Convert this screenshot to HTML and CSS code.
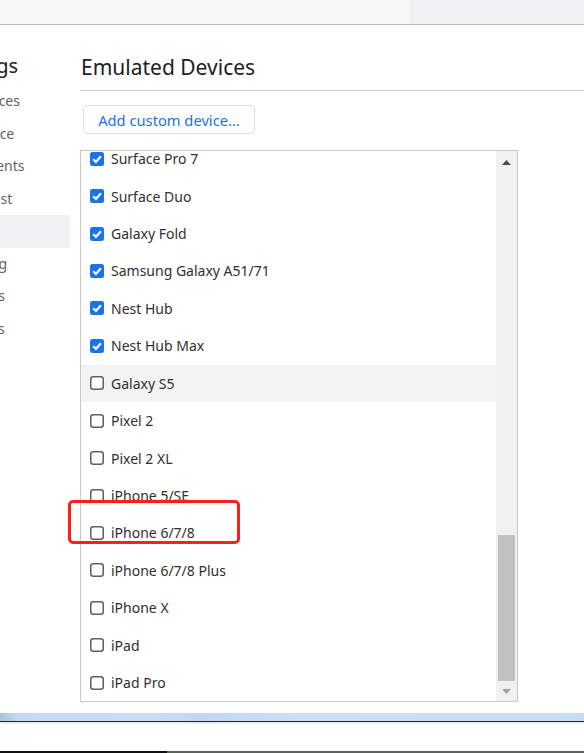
FILE: index.html
```html
<!DOCTYPE html>
<html>
<head>
<meta charset="utf-8">
<link rel="stylesheet" href="styles.css">
</head>
<body>
<div class="page">
  <div class="topbar"><div class="tb-left"></div><div class="tb-right"></div></div>
  <div class="window">
    <nav class="sidebar">
      <div class="sb-inner">
        <div class="sb-title">Settings</div>
        <div class="sb-item">Preferences</div>
        <div class="sb-item">Workspace</div>
        <div class="sb-item">Experiments</div>
        <div class="sb-item">Ignore List</div>
        <div class="sb-item selected">Devices</div>
        <div class="sb-item">Throttling</div>
        <div class="sb-item">Locations</div>
        <div class="sb-item">Shortcuts</div>
      </div>
    </nav>
    <main class="main">
      <h1 class="heading">Emulated Devices</h1>
      <button class="add-btn">Add custom device...</button>
      <div class="listbox">
        <div class="viewport">
          <div class="rows">
            <div class="row"><svg class="cb" viewBox="0 0 14 14"><rect x="0" y="0" width="14" height="14" rx="2.5" fill="#1a73e8"/><path d="M3.2 7.3 L5.9 9.9 L10.9 4.3" fill="none" stroke="#fff" stroke-width="2.2"/></svg><span>Surface Pro 7</span></div>
            <div class="row"><svg class="cb" viewBox="0 0 14 14"><rect x="0" y="0" width="14" height="14" rx="2.5" fill="#1a73e8"/><path d="M3.2 7.3 L5.9 9.9 L10.9 4.3" fill="none" stroke="#fff" stroke-width="2.2"/></svg><span>Surface Duo</span></div>
            <div class="row"><svg class="cb" viewBox="0 0 14 14"><rect x="0" y="0" width="14" height="14" rx="2.5" fill="#1a73e8"/><path d="M3.2 7.3 L5.9 9.9 L10.9 4.3" fill="none" stroke="#fff" stroke-width="2.2"/></svg><span>Galaxy Fold</span></div>
            <div class="row"><svg class="cb" viewBox="0 0 14 14"><rect x="0" y="0" width="14" height="14" rx="2.5" fill="#1a73e8"/><path d="M3.2 7.3 L5.9 9.9 L10.9 4.3" fill="none" stroke="#fff" stroke-width="2.2"/></svg><span>Samsung Galaxy A51/71</span></div>
            <div class="row"><svg class="cb" viewBox="0 0 14 14"><rect x="0" y="0" width="14" height="14" rx="2.5" fill="#1a73e8"/><path d="M3.2 7.3 L5.9 9.9 L10.9 4.3" fill="none" stroke="#fff" stroke-width="2.2"/></svg><span>Nest Hub</span></div>
            <div class="row"><svg class="cb" viewBox="0 0 14 14"><rect x="0" y="0" width="14" height="14" rx="2.5" fill="#1a73e8"/><path d="M3.2 7.3 L5.9 9.9 L10.9 4.3" fill="none" stroke="#fff" stroke-width="2.2"/></svg><span>Nest Hub Max</span></div>
            <div class="row hover"><svg class="cb" viewBox="0 0 14 14"><rect x="0.75" y="0.75" width="12.5" height="12.5" rx="2.5" fill="#fff" stroke="#5f5f5f" stroke-width="1.5"/></svg><span>Galaxy S5</span></div>
            <div class="row"><svg class="cb" viewBox="0 0 14 14"><rect x="0.75" y="0.75" width="12.5" height="12.5" rx="2.5" fill="#fff" stroke="#5f5f5f" stroke-width="1.5"/></svg><span>Pixel 2</span></div>
            <div class="row"><svg class="cb" viewBox="0 0 14 14"><rect x="0.75" y="0.75" width="12.5" height="12.5" rx="2.5" fill="#fff" stroke="#5f5f5f" stroke-width="1.5"/></svg><span>Pixel 2 XL</span></div>
            <div class="row"><svg class="cb" viewBox="0 0 14 14"><rect x="0.75" y="0.75" width="12.5" height="12.5" rx="2.5" fill="#fff" stroke="#5f5f5f" stroke-width="1.5"/></svg><span>iPhone 5/SE</span></div>
            <div class="row"><svg class="cb" viewBox="0 0 14 14"><rect x="0.75" y="0.75" width="12.5" height="12.5" rx="2.5" fill="#fff" stroke="#5f5f5f" stroke-width="1.5"/></svg><span>iPhone 6/7/8</span></div>
            <div class="row"><svg class="cb" viewBox="0 0 14 14"><rect x="0.75" y="0.75" width="12.5" height="12.5" rx="2.5" fill="#fff" stroke="#5f5f5f" stroke-width="1.5"/></svg><span>iPhone 6/7/8 Plus</span></div>
            <div class="row"><svg class="cb" viewBox="0 0 14 14"><rect x="0.75" y="0.75" width="12.5" height="12.5" rx="2.5" fill="#fff" stroke="#5f5f5f" stroke-width="1.5"/></svg><span>iPhone X</span></div>
            <div class="row"><svg class="cb" viewBox="0 0 14 14"><rect x="0.75" y="0.75" width="12.5" height="12.5" rx="2.5" fill="#fff" stroke="#5f5f5f" stroke-width="1.5"/></svg><span>iPad</span></div>
            <div class="row"><svg class="cb" viewBox="0 0 14 14"><rect x="0.75" y="0.75" width="12.5" height="12.5" rx="2.5" fill="#fff" stroke="#5f5f5f" stroke-width="1.5"/></svg><span>iPad Pro</span></div>
          </div>
        </div>
        <div class="scrollbar">
          <div class="sb-btn up"><svg width="9" height="5" viewBox="0 0 9 5"><path d="M4.5 0 L9 5 L0 5 Z" fill="#4d4d4d"/></svg></div>
          <div class="track"><div class="thumb"></div></div>
          <div class="sb-btn down"><svg width="9" height="5" viewBox="0 0 9 5"><path d="M0 0 L9 0 L4.5 5 Z" fill="#a3a3a3"/></svg></div>
        </div>
      </div>
    </main>
  </div>
  <div class="bottom">
    <div class="strip"></div>
    <div class="dark-line"></div>
    <div class="gray-line"></div>
    <div class="blank"></div>
    <div class="edge"><div class="edge-left"></div><div class="edge-right"></div></div>
  </div>
  <div class="annotation"></div>
</div>
</body>
</html>
```

FILE: styles.css
```css
* { box-sizing: border-box; }
html, body { margin: 0; padding: 0; }
body {
  width: 584px;
  height: 753px;
  overflow: hidden;
  background: #fff;
  font-family: "Noto Sans", "Open Sans", sans-serif;
}
.page {
  position: relative;
  width: 584px;
  height: 753px;
  display: flex;
  flex-direction: column;
}
.topbar {
  height: 25px;
  display: flex;
  border-bottom: 1px solid #b9b9b9;
  flex: none;
}
.tb-left { width: 410px; background: #f6f7f6; }
.tb-right { flex: 1; background: #f0f1f3; }

.window {
  height: 688px;
  display: flex;
  flex: none;
}
.sidebar {
  width: 70px;
  flex: none;
  overflow: hidden;
}
.sb-inner {
  margin-left: -58px;
  width: 128px;
}
.sb-title {
  font-size: 20px;
  color: #202124;
  height: 60px;
  padding-top: 27px;
  line-height: 28px;
}
.sb-item {
  height: 32.5px;
  line-height: 32.5px;
  font-size: 14px;
  color: #5f6368;
  white-space: nowrap;
}
.sb-item.selected { background: #f1f1f3; color: #202124; }

.main {
  flex: 1;
  padding-left: 10px;
  display: flex;
  flex-direction: column;
  align-items: flex-start;
}
.heading {
  margin: 27px 0 0 0;
  width: 100%;
  font-size: 21px;
  font-weight: normal;
  line-height: 30px;
  color: #202124;
  padding: 0 0 8px 1px;
  border-bottom: 1px solid #d0d0d0;
}
.add-btn {
  margin: 14px 0 0 3px;
  height: 29px;
  width: 172px;
  padding: 0;
  background: #fff;
  border: 1px solid #dadce0;
  border-radius: 4px;
  color: #1a73e8;
  font-family: "Noto Sans", "Open Sans", sans-serif;
  font-size: 14.7px;
}
.listbox {
  margin-top: 16px;
  width: 438px;
  height: 552px;
  border: 1px solid #c8c8c8;
  display: flex;
}
.viewport {
  flex: 1;
  overflow: hidden;
}
.rows { margin-top: -11px; }
.row {
  height: 37.43px;
  display: flex;
  align-items: center;
  padding-left: 9px;
  gap: 7px;
  font-size: 14px;
  color: #303030;
  white-space: nowrap;
}
.row.hover { background: #f3f3f3; }
.cb { width: 14px; height: 14px; flex: none; }

.scrollbar {
  width: 21px;
  flex: none;
  background: #f0f0f0;
  display: flex;
  flex-direction: column;
}
.sb-btn {
  display: flex;
  align-items: center;
  justify-content: center;
  flex: none;
}
.sb-btn.up { height: 22px; }
.sb-btn.down { height: 20px; }
.track {
  flex: 1;
  display: flex;
  flex-direction: column;
  justify-content: flex-end;
}
.thumb {
  height: 146px;
  margin: 0 2px;
  background: #c1c1c1;
}

.bottom {
  flex: 1;
  display: flex;
  flex-direction: column;
}
.strip {
  height: 8px;
  background: linear-gradient(90deg, #a9c3de 0, #c3dbf5 18px, #c7def7 150px, #bfd7f3 200px, #c9e0f8 300px, #c6ddf6 584px);
}
.dark-line { height: 1px; background: #222; }
.gray-line { height: 2px; background: #ececec; }
.blank { flex: 1; background: #fff; }
.edge { height: 2px; display: flex; }
.edge-left { width: 167px; background: #111; }
.edge-right { flex: 1; background: #5a605a; }

.annotation {
  position: absolute;
  left: 68px;
  top: 500px;
  width: 172px;
  height: 44px;
  border: 3.5px solid #ff1f1f;
  border-radius: 5px;
}
```
